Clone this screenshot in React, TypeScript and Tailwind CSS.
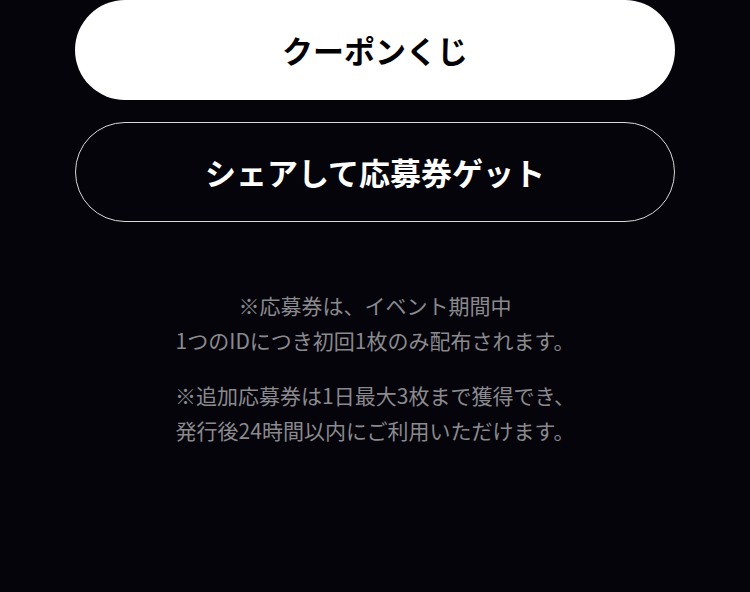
export default function App() {
  return (
    <div
      className="min-h-[592px] w-full bg-[#05040b] flex flex-col items-center"
      style={{ fontFamily: '"Noto Sans CJK JP", "Noto Sans", sans-serif' }}
    >
      {/* Buttons */}
      <div className="w-[600px] flex flex-col gap-[22px]">
        <button className="h-[100px] w-full rounded-full bg-white text-black text-[31px] font-bold">
          クーポンくじ
        </button>
        <button className="h-[100px] w-full rounded-full border border-[#d9d9d9] bg-transparent text-white text-[31px] font-bold">
          シェアして応募券ゲット
        </button>
      </div>

      {/* Notes */}
      <div className="mt-[66px] text-center text-[21px] leading-[35px] text-[#8a8a8e] space-y-[20px]">
        <p>
          ※応募券は、イベント期間中
          <br />
          1つのIDにつき初回1枚のみ配布されます。
        </p>
        <p>
          ※追加応募券は1日最大3枚まで獲得でき、
          <br />
          発行後24時間以内にご利用いただけます。
        </p>
      </div>
    </div>
  );
}
